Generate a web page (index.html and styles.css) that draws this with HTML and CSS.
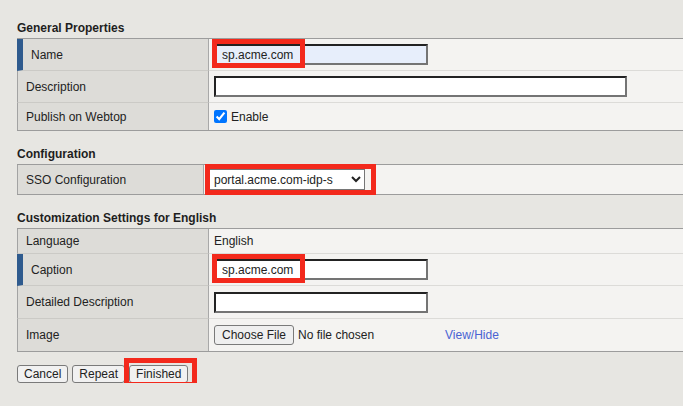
FILE: index.html
```html
<!DOCTYPE html>
<html>
<head>
<meta charset="utf-8">
<link rel="stylesheet" href="styles.css">
</head>
<body>
<div class="page">
  <h2 class="section-title">General Properties</h2>
  <div class="props">
    <div class="label req row-32">Name</div>
    <div class="value row-32">
      <span class="field">
        <input class="text text-short autofill" type="text" value="sp.acme.com">
        <span class="mark mark-input"></span>
      </span>
    </div>
    <div class="label row-32">Description</div>
    <div class="value row-32"><input class="text text-long" type="text"></div>
    <div class="label last row-27">Publish on Webtop</div>
    <div class="value last row-27">
      <label class="check"><input type="checkbox" checked>Enable</label>
    </div>
  </div>

  <h2 class="section-title gap">Configuration</h2>
  <div class="props props-narrow">
    <div class="label last row-29">SSO Configuration</div>
    <div class="value last row-29">
      <span class="field">
        <select class="select"><option>portal.acme.com-idp-s</option></select>
        <span class="mark mark-select"></span>
      </span>
    </div>
  </div>

  <h2 class="section-title gap">Customization Settings for English</h2>
  <div class="props">
    <div class="label row-25">Language</div>
    <div class="value row-25">English</div>
    <div class="label req row-32">Caption</div>
    <div class="value row-32">
      <span class="field">
        <input class="text text-short" type="text" value="sp.acme.com">
        <span class="mark mark-input"></span>
      </span>
    </div>
    <div class="label row-33">Detailed Description</div>
    <div class="value row-33"><input class="text text-short" type="text"></div>
    <div class="label last row-32">Image</div>
    <div class="value last row-32">
      <input class="file" type="file">
      <a class="link" href="#">View/Hide</a>
    </div>
  </div>

  <div class="actions">
    <button class="btn" type="button">Cancel</button>
    <button class="btn" type="button">Repeat</button>
    <span class="field">
      <button class="btn" type="button">Finished</button>
      <span class="mark mark-button"></span>
    </span>
  </div>
</div>
</body>
</html>
```

FILE: styles.css
```css
* {
  box-sizing: border-box;
}

html, body {
  margin: 0;
  padding: 0;
  background: #e7e6e2;
  overflow: hidden;
}

body {
  font-family: "Liberation Sans", Arial, sans-serif;
  font-size: 12px;
  color: #222;
}

.page {
  padding: 21px 0 0 17px;
  width: 720px;
}

.section-title {
  margin: 0 0 3px 0;
  font-size: 12px;
  line-height: 14px;
  font-weight: bold;
  color: #1e1e1e;
}

.section-title.gap {
  margin-top: 16px;
}

.props {
  display: grid;
  grid-template-columns: 192px 1fr;
  border-top: 1px solid #9c9c9c;
  border-bottom: 1px solid #9c9c9c;
}

.props-narrow {
  grid-template-columns: 187px 1fr;
}

.label {
  display: flex;
  align-items: center;
  padding-left: 8px;
  background: #dddcd8;
  border-left: 1px solid #a3a3a3;
  border-right: 1px solid #a8a8a8;
  border-bottom: 1px solid #cbcac6;
  color: #222;
}

.label.req {
  border-left: 6px solid #2f5b8e;
}

.value {
  display: flex;
  align-items: center;
  padding-left: 5px;
  background: #f4f3f1;
  border-bottom: 1px solid #dcdbd8;
}

.label.last,
.value.last {
  border-bottom: none;
}

.row-25 { height: 25px; }
.row-27 { height: 27px; }
.row-29 { height: 29px; }
.row-32 { height: 32px; }
.row-33 { height: 33px; }

.field {
  position: relative;
  display: inline-flex;
}

.text {
  height: 21px;
  margin: 0;
  padding: 0 0 0 6px;
  border: 2px solid;
  border-color: #222 #747474 #747474 #222;
  background: #fff;
  font-family: inherit;
  font-size: 12px;
  color: #222;
  outline: none;
}

.text-short { width: 214px; }
.text-long { width: 413px; }

.autofill {
  background: #e7eefb;
}

.check {
  display: inline-flex;
  align-items: center;
  font-size: 12px;
}

.check input {
  margin: 0 4px 0 0;
  width: 13px;
  height: 13px;
}

.select {
  width: 156px;
  height: 21px;
  margin: 0;
  font-family: inherit;
  font-size: 12px;
  color: #222;
  background: #fff;
}

.file {
  width: 226px;
  font-family: inherit;
  font-size: 12px;
  color: #222;
}

.file::file-selector-button {
  font-family: inherit;
  font-size: 12px;
  color: #222;
  height: 20px;
  padding: 0 7px;
  margin: 0 4px 0 0;
  border: 1px solid #7a7a7a;
  border-radius: 3px;
  background: #efefef;
}

.link {
  margin-left: 5px;
  color: #4a63d3;
  text-decoration: none;
}

.actions {
  display: flex;
  gap: 4px;
  margin-top: 13px;
}

.btn {
  height: 18px;
  padding: 0 6px;
  margin: 0;
  font-family: inherit;
  font-size: 12px;
  color: #222;
  border: 1px solid #7a7a7a;
  border-radius: 3px;
  background: #f1f1f1;
}

.mark {
  position: absolute;
  border: 5px solid #f3291c;
  pointer-events: none;
}

.mark-input {
  left: -2px;
  top: -5px;
  width: 93px;
  height: 29px;
}

.mark-select {
  left: -4px;
  top: -5px;
  width: 171px;
  height: 31px;
}

.mark-button {
  left: -5px;
  top: -7px;
  width: 73px;
  height: 29px;
}
```
